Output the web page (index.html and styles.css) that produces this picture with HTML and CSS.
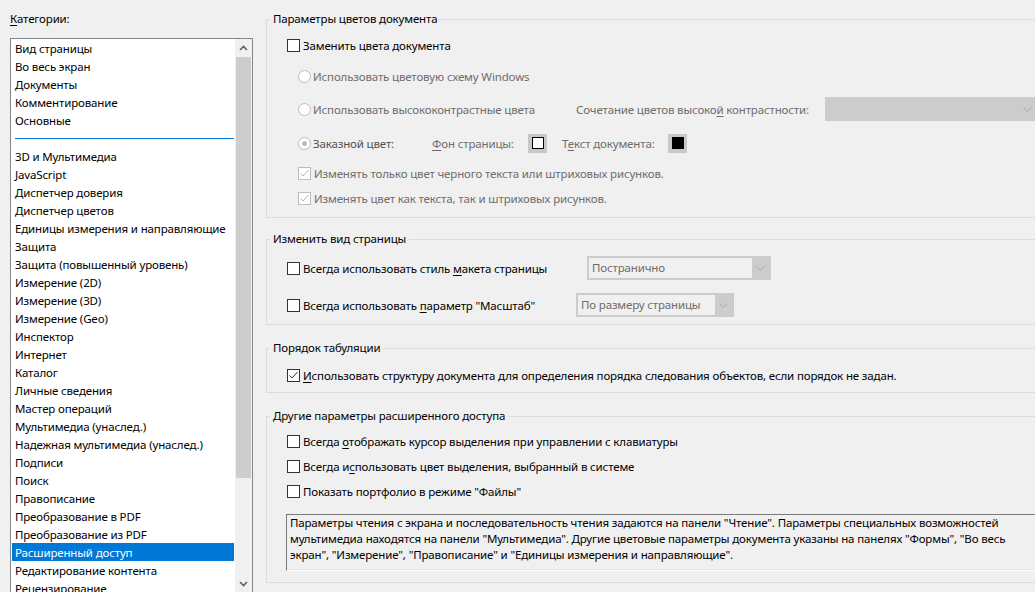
FILE: index.html
```html
<!DOCTYPE html>
<html lang="ru">
<head>
    <meta charset="UTF-8">
    <title>Установки — Расширенный доступ</title>
    <link rel="stylesheet" href="styles.css">
</head>
<body>
<div class="dialog">
    <aside class="categories">
        <div class="cat-label"><u>К</u>атегории:</div>
        <div class="listbox">
            <ul class="items">
                <li>Вид страницы</li>
                <li>Во весь экран</li>
                <li>Документы</li>
                <li>Комментирование</li>
                <li>Основные</li>
                <li class="sep"></li>
                <li>3D и Мультимедиа</li>
                <li>JavaScript</li>
                <li>Диспетчер доверия</li>
                <li>Диспетчер цветов</li>
                <li>Единицы измерения и направляющие</li>
                <li>Защита</li>
                <li>Защита (повышенный уровень)</li>
                <li>Измерение (2D)</li>
                <li>Измерение (3D)</li>
                <li>Измерение (Geo)</li>
                <li>Инспектор</li>
                <li>Интернет</li>
                <li>Каталог</li>
                <li>Личные сведения</li>
                <li>Мастер операций</li>
                <li>Мультимедиа (унаслед.)</li>
                <li>Надежная мультимедиа (унаслед.)</li>
                <li>Подписи</li>
                <li>Поиск</li>
                <li>Правописание</li>
                <li>Преобразование в PDF</li>
                <li>Преобразование из PDF</li>
                <li class="selected">Расширенный доступ</li>
                <li>Редактирование контента</li>
                <li>Рецензирование</li>
            </ul>
            <div class="scrollbar">
                <div class="sb-btn sb-up">
                    <svg width="9" height="6" viewBox="0 0 9 6"><polyline points="1,5 4.5,1.5 8,5" fill="none" stroke="#606060" stroke-width="1.6"/></svg>
                </div>
                <div class="sb-track"><div class="sb-thumb"></div></div>
                <div class="sb-btn sb-down">
                    <svg width="9" height="6" viewBox="0 0 9 6"><polyline points="1,1 4.5,4.5 8,1" fill="none" stroke="#606060" stroke-width="1.6"/></svg>
                </div>
            </div>
        </div>
    </aside>

    <main class="settings">
        <!-- Параметры цветов -->
        <fieldset class="group g-colors">
            <legend>Параметры цветов документа</legend>
            <div class="row r1 lvl1">
                <span class="cb"></span>
                <span>Заменить цвета документа</span>
            </div>
            <div class="row r2 lvl2 off">
                <span class="rb"></span>
                <span>Использовать цветовую схему Windows</span>
            </div>
            <div class="row r3 lvl2 off">
                <div class="cell w-hc">
                    <span class="rb"></span>
                    <span>Использовать высококонтрастные цвета</span>
                </div>
                <span class="lbl w-hc-label">Сочетание цветов высоко<u>й</u> контрастности:</span>
                <div class="combo combo-hc">
                    <svg class="chev" width="9" height="5" viewBox="0 0 9 5"><polyline points="0.5,0.5 4.5,4.5 8.5,0.5" fill="none" stroke="#a8a8a8" stroke-width="1"/></svg>
                </div>
            </div>
            <div class="row r4 lvl2 off">
                <div class="cell w-custom">
                    <span class="rb on"></span>
                    <span class="dark">Заказной цвет:</span>
                </div>
                <span class="lbl w-bg"><u>Ф</u>он страницы:</span>
                <span class="swatch"><span class="swatch-white"></span></span>
                <span class="lbl w-fg">Т<u>е</u>кст документа:</span>
                <span class="swatch"><span class="swatch-black"></span></span>
            </div>
            <div class="row r5 lvl2 off">
                <span class="cb dis"><svg width="11" height="11" viewBox="0 0 11 11"><polyline points="1.5,5.5 4,8 9.5,2" fill="none" stroke="#b5b5b5" stroke-width="1"/></svg></span>
                <span>Изменять только цвет черного текста или штриховых рисунков.</span>
            </div>
            <div class="row r6 lvl2 off">
                <span class="cb dis"><svg width="11" height="11" viewBox="0 0 11 11"><polyline points="1.5,5.5 4,8 9.5,2" fill="none" stroke="#b5b5b5" stroke-width="1"/></svg></span>
                <span>Изменять цвет как текста, так и штриховых рисунков.</span>
            </div>
        </fieldset>

        <!-- Вид страницы -->
        <fieldset class="group g-view">
            <legend>Изменить вид страницы</legend>
            <div class="row tall lvl1">
                <div class="cell w-layout">
                    <span class="cb"></span>
                    <span>Всегда использовать стиль <u>м</u>акета страницы</span>
                </div>
                <div class="combo combo-layout">
                    <span class="combo-field">Постранично</span>
                    <svg class="chev" width="9" height="5" viewBox="0 0 9 5"><polyline points="0.5,0.5 4.5,4.5 8.5,0.5" fill="none" stroke="#a8a8a8" stroke-width="1"/></svg>
                </div>
            </div>
            <div class="row tall second lvl1">
                <div class="cell w-zoom">
                    <span class="cb"></span>
                    <span>Всегда использовать <u>п</u>араметр "Масштаб"</span>
                </div>
                <div class="combo combo-zoom">
                    <span class="combo-field">По размеру страницы</span>
                    <svg class="chev" width="9" height="5" viewBox="0 0 9 5"><polyline points="0.5,0.5 4.5,4.5 8.5,0.5" fill="none" stroke="#a8a8a8" stroke-width="1"/></svg>
                </div>
            </div>
        </fieldset>

        <!-- Порядок табуляции -->
        <fieldset class="group g-tab">
            <legend>Порядок табуляции</legend>
            <div class="row lvl1">
                <span class="cb"><svg width="11" height="11" viewBox="0 0 11 11"><polyline points="1.5,5.5 4,8 9.5,2" fill="none" stroke="#333" stroke-width="1"/></svg></span>
                <span><u>И</u>спользовать структуру документа для определения порядка следования объектов, если порядок не задан.</span>
            </div>
        </fieldset>

        <!-- Другие параметры -->
        <fieldset class="group g-other">
            <legend>Другие параметры расширенного доступа</legend>
            <div class="row lvl1">
                <span class="cb"></span>
                <span>Всегда <u>о</u>тображать курсор выделения при управлении с клавиатуры</span>
            </div>
            <div class="row next lvl1">
                <span class="cb"></span>
                <span>Всегда и<u>с</u>пользовать цвет выделения, выбранный в системе</span>
            </div>
            <div class="row next lvl1">
                <span class="cb"></span>
                <span>Показать портфолио в режиме "Файлы"</span>
            </div>
            <div class="note">
                Параметры чтения с экрана и последовательность чтения задаются на панели "Чтение". Параметры специальных возможностей<br>
                мультимедиа находятся на панели "Мультимедиа". Другие цветовые параметры документа указаны на панелях "Формы", "Во весь<br>
                экран", "Измерение", "Правописание" и "Единицы измерения и направляющие".
            </div>
        </fieldset>
    </main>
</div>
</body>
</html>
```

FILE: styles.css
```css
html, body {
    margin: 0;
    height: 592px;
    overflow: hidden;
}
body {
    background: #f0f0f0;
    font-family: "Segoe UI", "Noto Sans", sans-serif;
    font-size: 11.5px;
    letter-spacing: -0.15px;
    color: #000;
}
u {
    text-decoration: underline;
    text-underline-offset: 2px;
}
.dialog {
    display: flex;
    height: 592px;
}

/* left: categories */
.categories {
    width: 243px;
    padding-left: 10px;
    flex: none;
}
.cat-label {
    margin-top: 10px;
    height: 18px;
    line-height: 18px;
    margin-bottom: 10px;
}
.listbox {
    display: flex;
    height: 555px;
    box-sizing: border-box;
    border: 1px solid #828790;
    background: #fff;
}
.items {
    list-style: none;
    margin: 0;
    padding: 0;
    flex: 1;
    overflow: hidden;
}
.items li {
    height: 18px;
    line-height: 19px;
    padding-left: 4px;
    white-space: nowrap;
    overflow: hidden;
}
.items li.sep {
    position: relative;
}
.items li.sep::after {
    content: "";
    position: absolute;
    left: 4px;
    right: 1px;
    top: 9px;
    height: 1px;
    background: #0078d7;
}
.items li.selected {
    background: #0078d7;
    color: #fff;
    margin: 0 1px;
    padding-left: 3px;
}
.scrollbar {
    width: 17px;
    flex: none;
    display: flex;
    flex-direction: column;
    background: #f0f0f0;
}
.sb-btn {
    height: 18px;
    display: flex;
    align-items: center;
    justify-content: center;
    flex: none;
}
.sb-down {
    height: 17px;
}
.sb-track {
    flex: 1;
    padding: 0 1px;
}
.sb-thumb {
    height: 421px;
    background: #cdcdcd;
}

/* right: settings */
.settings {
    flex: 1;
    padding-left: 13px;
    padding-top: 10px;
    min-width: 0;
}
.group {
    margin: 0 -30px 0 0;
    padding: 0;
    border: 1px solid #dcdcdc;
    min-width: 0;
}
.group legend {
    margin-left: 3px;
    padding: 0 3px;
    height: 18px;
    line-height: 18px;
}
.g-colors { padding-top: 7px; padding-bottom: 9px; }
.g-view { margin-top: 12px; padding-top: 8px; padding-bottom: 7px; }
.g-tab { margin-top: 14px; padding-top: 8px; padding-bottom: 7px; }
.g-other { margin-top: 14px; padding-top: 6px; padding-bottom: 11px; }

.row {
    display: flex;
    align-items: center;
    height: 20px;
    white-space: nowrap;
}
.row.tall { height: 24px; }
.row.second { margin-top: 13px; }
.row.next { margin-top: 5px; }
.lvl1 { padding-left: 20px; }
.lvl2 { padding-left: 31px; }
.off { color: #6d6d6d; }
.off .dark { color: #505050; }

.r2 { margin-top: 11px; }
.r3 { margin-top: 11px; height: 24px; }
.r4 { margin-top: 11px; height: 22px; }
.r5 { margin-top: 9px; }
.r6 { margin-top: 5px; }

.cell {
    display: flex;
    align-items: center;
    flex: none;
}
.lbl {
    display: block;
    flex: none;
}
.w-hc { width: 278px; }
.w-hc-label { width: 249px; }
.w-custom { width: 134px; }
.w-bg { width: 96px; }
.w-fg { width: 106px; margin-left: 15px; }
.w-layout { width: 300px; }
.w-zoom { width: 289px; }

.cb, .rb {
    width: 13px;
    height: 13px;
    box-sizing: border-box;
    border: 1px solid #333;
    background: #fff;
    flex: none;
    margin-right: 3px;
    display: flex;
    align-items: center;
    justify-content: center;
}
.cb.dis {
    border-color: #bcbcbc;
}
.rb {
    border-radius: 50%;
    border-color: #bcbcbc;
    margin-right: 2px;
}
.rb.on::after {
    content: "";
    width: 5px;
    height: 5px;
    border-radius: 50%;
    background: #bcbcbc;
}

.combo {
    height: 24px;
    box-sizing: border-box;
    background: #cccccc;
    display: flex;
    align-items: center;
    padding: 2px;
    flex: none;
}
.combo-hc { width: 215px; justify-content: flex-end; padding-right: 4px; }
.combo-layout { width: 184px; }
.combo-zoom { width: 158px; }
.combo-field {
    flex: 1;
    height: 20px;
    line-height: 20px;
    background: #f0f0f0;
    color: #6d6d6d;
    padding-left: 3px;
}
.combo .chev {
    margin: 0 4px;
    flex: none;
}

.swatch {
    width: 19px;
    height: 19px;
    background: #c8c8c8;
    display: flex;
    align-items: center;
    justify-content: center;
    flex: none;
}
.swatch-white, .swatch-black {
    width: 12px;
    height: 12px;
    box-sizing: border-box;
    border: 1px solid #000;
    background: #fff;
}
.swatch-black {
    background: #000;
}

.note {
    margin: 13px 0 0 19px;
    height: 57px;
    box-sizing: border-box;
    border: 1px solid;
    border-color: #7a7a7a #fff #fff #7a7a7a;
    box-shadow: inset 0 -1px 0 #e3e3e3;
    padding: 0 3px;
    line-height: 16px;
    white-space: nowrap;
}
```
